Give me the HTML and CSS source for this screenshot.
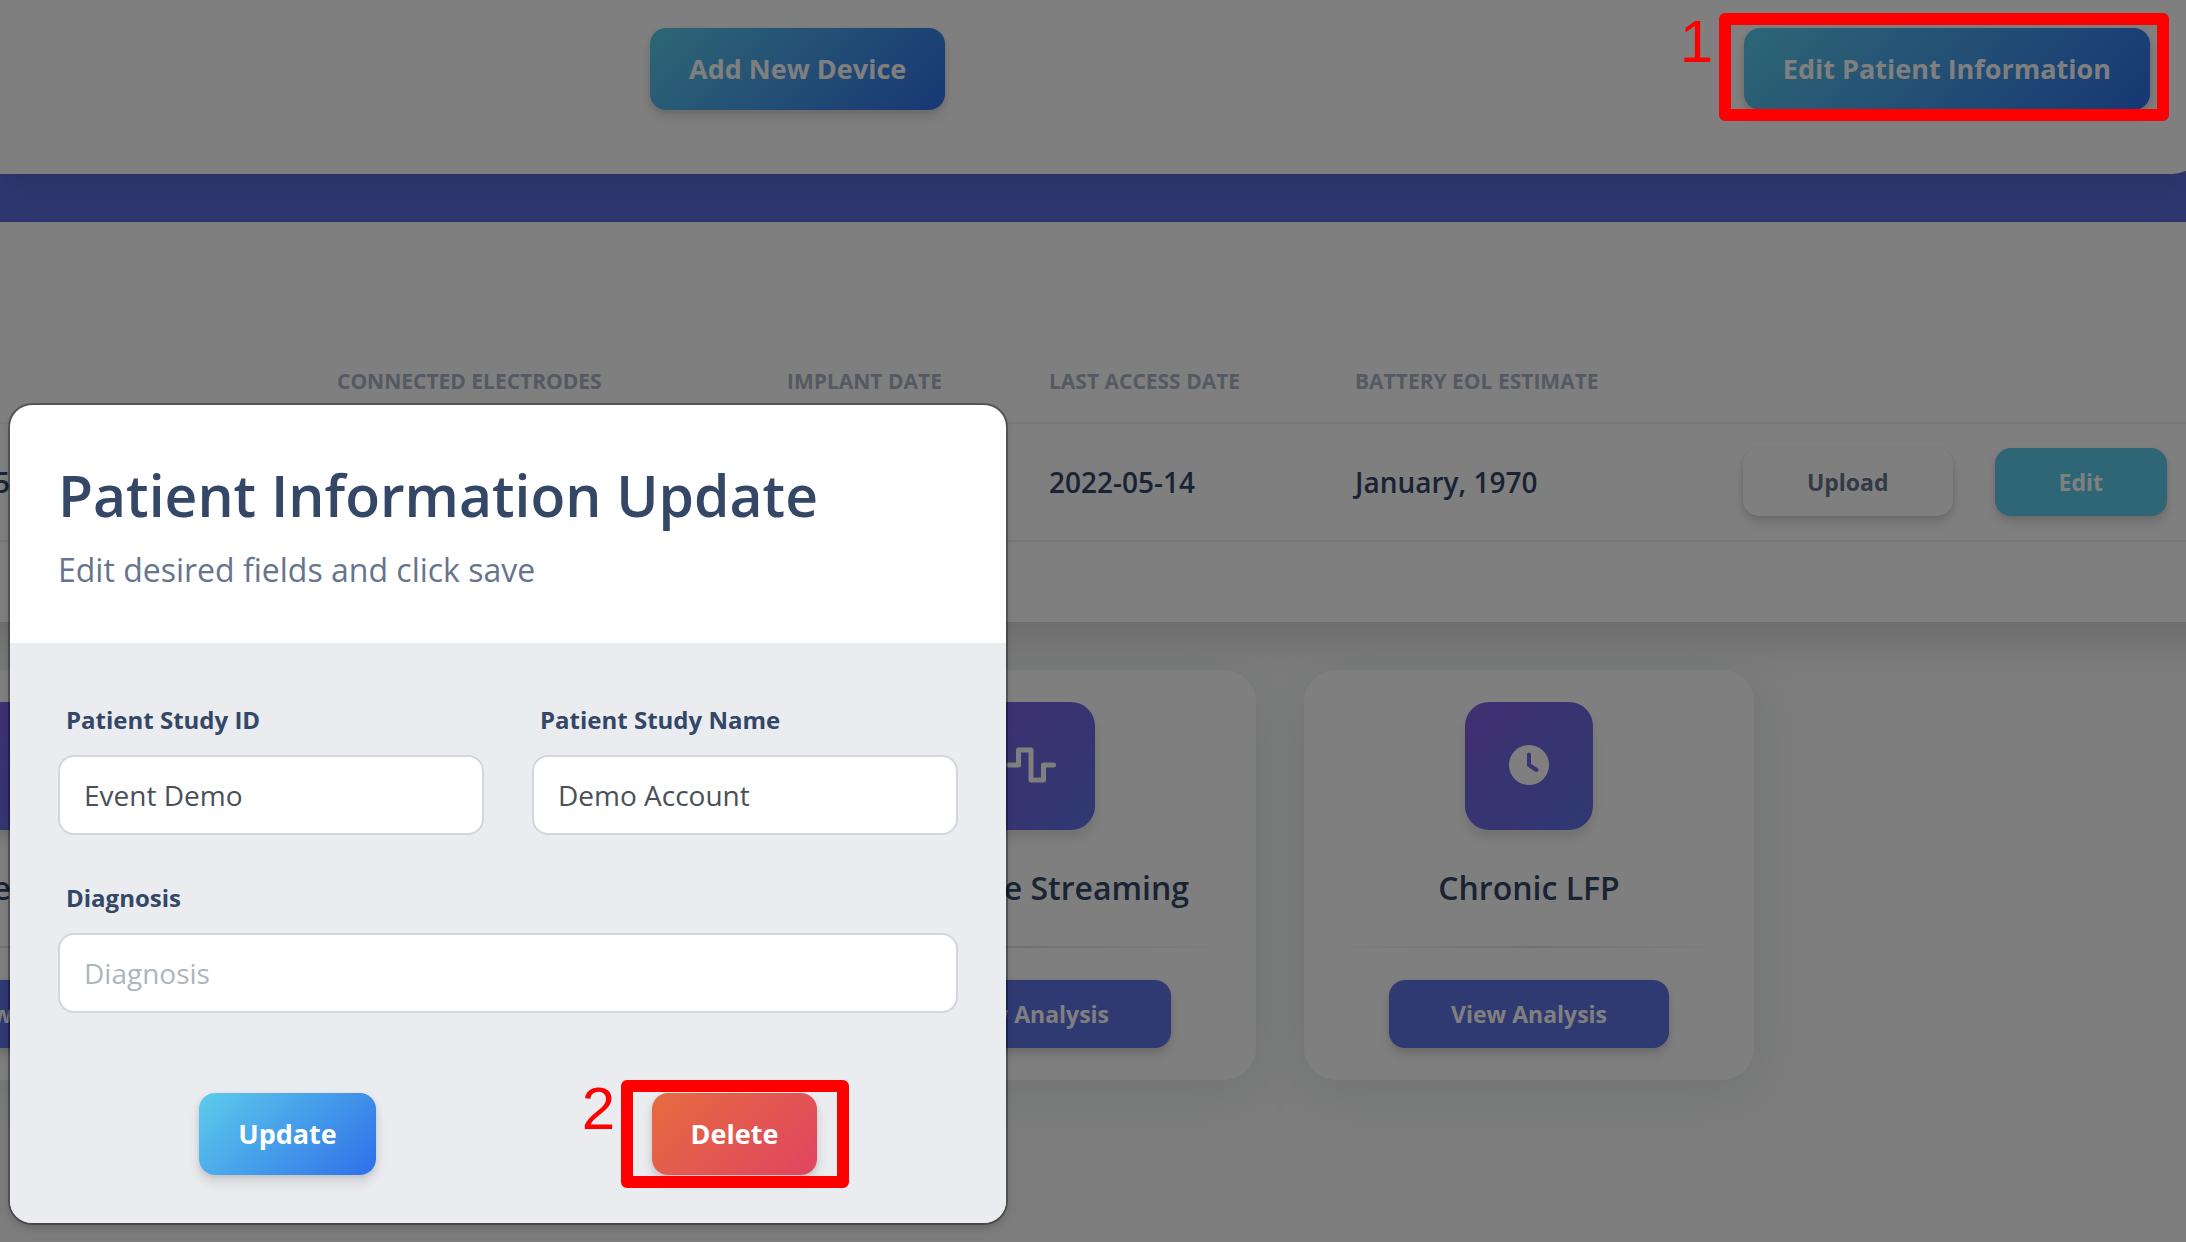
FILE: index.html
```html
<!DOCTYPE html>
<html lang="en">
<head>
<meta charset="utf-8">
<title>Patient Overview</title>
<link rel="stylesheet" href="styles.css">
</head>
<body>
<main class="page">
  <section class="profile">
    <button type="button" class="btn btn-lg btn-info">Add New Device</button>
    <button type="button" class="btn btn-lg btn-info">Edit Patient Information</button>
  </section>
  <section class="devices">
    <table class="device-table">
      <colgroup><col class="c-name"><col class="c-electrodes"><col class="c-implant"><col class="c-access"><col class="c-battery"><col></colgroup>
      <thead>
        <tr><th></th><th>CONNECTED ELECTRODES</th><th>IMPLANT DATE</th><th>LAST ACCESS DATE</th><th>BATTERY EOL ESTIMATE</th><th></th></tr>
      </thead>
      <tbody>
        <tr>
          <td>5</td><td></td><td></td><td>2022-05-14</td><td>January, 1970</td>
          <td><div class="row-actions">
            <button type="button" class="btn btn-upload">Upload</button>
            <button type="button" class="btn btn-edit">Edit</button>
          </div></td>
        </tr>
      </tbody>
    </table>
  </section>
  <section class="cards">
    <article class="card">
      <div class="tile"></div>
      <h2>BrainSense Survey</h2>
      <hr>
      <button type="button" class="btn btn-view">View Analysis</button>
    </article>
    <div></div>
    <article class="card">
      <div class="tile">
        <svg width="52" height="52" viewBox="0 0 52 52" fill="none" stroke="#fff" stroke-width="5" stroke-linecap="round" stroke-linejoin="round"><path d="M3.500 25H13.500V10H26V40H38.500V25H48.500"/></svg>
      </div>
      <h2>Indefinite Streaming</h2>
      <hr>
      <button type="button" class="btn btn-view">View Analysis</button>
    </article>
    <article class="card">
      <div class="tile">
        <svg width="52" height="52" viewBox="0 0 52 52" fill="none"><circle cx="26" cy="25" r="20" fill="#fff"/><path d="M26 14.500V25L33.500 30" stroke="#6e69e4" stroke-width="4" stroke-linecap="round" stroke-linejoin="round"/></svg>
      </div>
      <h2>Chronic LFP</h2>
      <hr>
      <button type="button" class="btn btn-view">View Analysis</button>
    </article>
  </section>
</main>
<div class="backdrop"></div>
<div class="modal" role="dialog" aria-labelledby="modal-title">
  <header class="modal-head">
    <h1 id="modal-title">Patient Information Update</h1>
    <p>Edit desired fields and click save</p>
  </header>
  <form class="modal-body">
    <div class="field">
      <label for="study-id">Patient Study ID</label>
      <input id="study-id" type="text" value="Event Demo">
    </div>
    <div class="field">
      <label for="study-name">Patient Study Name</label>
      <input id="study-name" type="text" value="Demo Account">
    </div>
    <div class="field wide">
      <label for="diagnosis">Diagnosis</label>
      <input id="diagnosis" type="text" placeholder="Diagnosis">
    </div>
    <div class="modal-actions">
      <button type="button" class="btn btn-lg btn-info">Update</button>
      <button type="button" class="btn btn-lg btn-danger">Delete</button>
    </div>
  </form>
</div>
<div class="mark mark-one"><span>1</span></div>
<div class="mark mark-two"><span>2</span></div>
</body>
</html>
```
FILE: styles.css
```css
* { box-sizing: border-box; }
body {
  margin: 0;
  position: relative;
  min-height: 100vh;
  overflow: hidden;
  background: #f8f9fa;
  color: #344767;
  font-family: "Open Sans", "Noto Sans", sans-serif;
}
.page {
  min-height: 100vh;
  overflow: hidden;
  background: linear-gradient(#5e72e4 320px, #f8f9f8 320px);
}
.btn {
  border: 0;
  border-radius: 16px;
  font-family: inherit;
  font-size: 23px;
  line-height: 36px;
  font-weight: 700;
  padding: 16px 64px;
  color: #fff;
  white-space: nowrap;
  box-shadow: 0 8px 12px rgba(0, 0, 0, .1), 0 2px 6px rgba(0, 0, 0, .1);
}
.btn-lg { font-size: 27px; line-height: 42px; padding: 20px 39px; }
.btn-info { background: linear-gradient(135deg, #5ccceb, #2f6fe8); }
.btn-danger { background: linear-gradient(135deg, #e66c40, #e04460); }
.btn-upload { background: #fff; color: #67748e; }
.btn-edit { background: #5ccceb; }
.btn-view { padding: 16px 62px; background: #5e72e4; }

.profile {
  display: flex;
  justify-content: space-between;
  margin-right: -18px;
  padding: 28px 54px 64px 650px;
  background: #fff;
  border-radius: 0 0 32px 0;
  box-shadow: 0 16px 40px rgba(0, 0, 0, .12);
}
.devices {
  margin: 48px -64px 0;
  padding: 117px 64px 80px;
  background: #fff;
  box-shadow: 0 16px 40px rgba(0, 0, 0, .15);
}
.device-table {
  width: 100%;
  table-layout: fixed;
  border-collapse: collapse;
}
.c-name { width: 337px; }
.c-electrodes { width: 450px; }
.c-implant { width: 262px; }
.c-access { width: 306px; }
.c-battery { width: 340px; }
.device-table th, .device-table td {
  padding: 0;
  text-align: left;
  border-bottom: 2px solid #e9ecef;
}
.device-table th {
  height: 84px;
  font-size: 21px;
  line-height: 32px;
  color: #aab3c4;
}
.device-table td {
  height: 118px;
  font-size: 28px;
  line-height: 42px;
  font-weight: 600;
}
.device-table td:first-child { text-indent: -6px; }
.row-actions { display: flex; justify-content: flex-end; gap: 42px; padding-right: 19px; }

.cards {
  display: grid;
  grid-template-columns: repeat(5, 1fr);
  gap: 48px;
  margin: 48px -66px 0 -190px;
}
.card {
  display: flex;
  flex-direction: column;
  align-items: center;
  padding: 32px 24px;
  background: #fff;
  border-radius: 32px;
  box-shadow: 0 8px 52px rgba(136, 144, 165, .18);
}
.tile {
  display: grid;
  place-items: center;
  width: 128px;
  height: 128px;
  border-radius: 24px;
  background: linear-gradient(135deg, #825ee4, #5e72e4);
  box-shadow: 0 8px 12px rgba(0, 0, 0, .12);
}
.card h2 {
  margin: 36px 0;
  font-size: 32px;
  line-height: 44px;
  font-weight: 600;
  white-space: nowrap;
}
.card hr {
  width: 100%;
  height: 2px;
  margin: 0 0 32px;
  border: 0;
  background: linear-gradient(90deg, transparent, #dfe1e6, transparent);
}

.backdrop { position: absolute; inset: 0; background: rgba(0, 0, 0, .5); }
.modal {
  position: absolute;
  left: 10px;
  top: 405px;
  width: 996px;
  overflow: hidden;
  background: #fff;
  border-radius: 22px;
  box-shadow: 0 0 0 2px rgba(0, 0, 0, .3), 0 4px 8px rgba(0, 0, 0, .2);
}
.modal-head { padding: 48px; }
.modal-head h1 { margin: 0; font-size: 57px; line-height: 84px; font-weight: 600; }
.modal-head p { margin: 8px 0 0; font-size: 32px; line-height: 50px; color: #67748e; }
.modal-body {
  display: grid;
  grid-template-columns: 1fr 1fr;
  gap: 46px 48px;
  padding: 60px 48px 48px;
  background: #eaecf0;
}
.field { display: flex; flex-direction: column; gap: 18px; }
.wide { grid-column: 1 / -1; }
.field label { padding-left: 8px; font-size: 24px; line-height: 34px; font-weight: 700; }
.field input {
  width: 100%;
  height: 80px;
  padding: 0 24px;
  border: 2px solid #d2d6da;
  border-radius: 16px;
  background: #fff;
  color: #495057;
  font-family: inherit;
  font-size: 28px;
}
.field input::placeholder { color: #adb5bd; opacity: 1; }
.modal-actions {
  grid-column: 1 / -1;
  display: grid;
  grid-template-columns: 1fr 1fr;
  justify-items: center;
  padding: 34px 0 0 6px;
}
.mark {
  position: absolute;
  height: 108px;
  border: 12px solid #f00;
  border-radius: 6px;
  color: #f00;
  font: 60px/60px "Liberation Sans", Arial, sans-serif;
}
.mark span { position: absolute; top: -13px; right: 100%; margin-right: 18px; }
.mark-one { top: 13px; right: 17px; width: 450px; }
.mark-two { top: 1080px; left: 621px; width: 228px; }
```
